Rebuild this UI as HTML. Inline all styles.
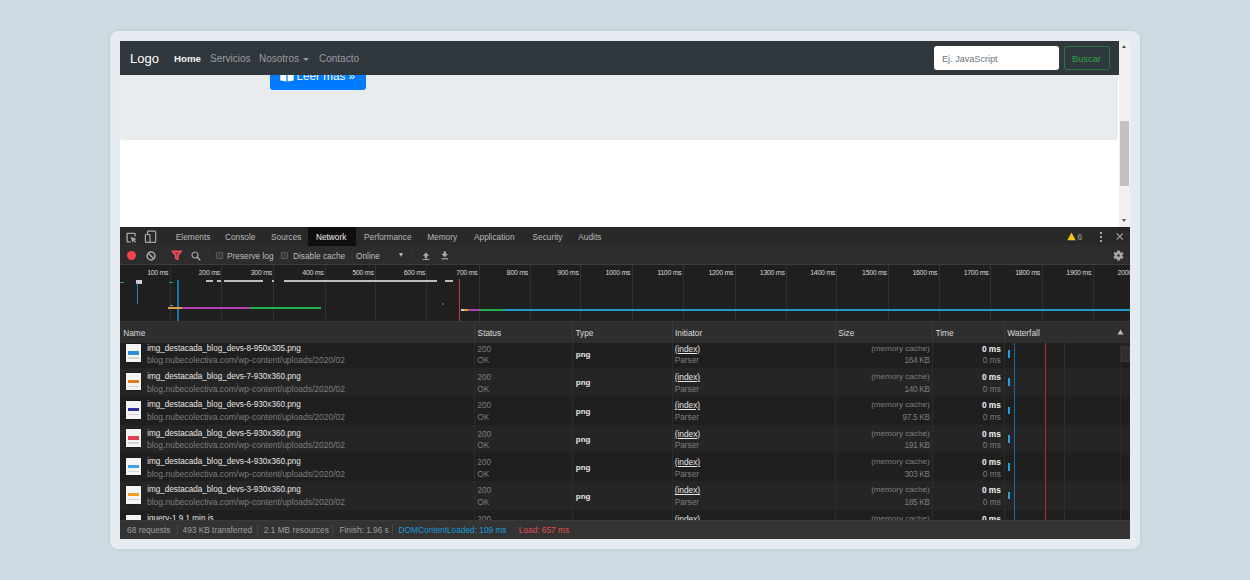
<!DOCTYPE html><html><head><meta charset="utf-8"><style>
*{margin:0;padding:0;box-sizing:border-box}
html,body{width:1250px;height:580px;overflow:hidden;background:#cddae1;font-family:"Liberation Sans",sans-serif}
.a{position:absolute}
.nt{position:absolute;top:1px;line-height:34px;font-size:10px;color:#9a9da0;white-space:nowrap}
.t{position:absolute;white-space:nowrap;font-size:8.3px;color:#bdbdbd;line-height:12px}
.r{text-align:right}
</style></head><body>
<div class="a" style="left:110px;top:31px;width:1030px;height:517.5px;background:#e5ebf0;border-radius:8px;box-shadow:0 0 3px rgba(150,170,180,0.45)"></div>
<div class="a" style="left:120px;top:41px;width:999px;height:186px;background:#fff"></div>
<div class="a" style="left:120px;top:60px;width:998px;height:80px;background:#e9ecef;border-radius:3px"></div>
<div class="a" style="left:270px;top:60px;width:96px;height:30px;background:#007bff;border-radius:3px"></div>
<svg class="a" style="left:279.5px;top:68px" width="14" height="14" viewBox="0 0 14 14"><path d="M0.3 2L6.4 3.2V13.6L0.3 12.6Z" fill="#fff"/><path d="M13.7 2L7.6 3.2V13.6L13.7 12.6Z" fill="#fff"/></svg>
<div class="a" style="left:296.5px;top:68px;font-size:11.7px;line-height:16px;color:#fff;white-space:nowrap">Leer más »</div>
<div class="a" style="left:120px;top:41px;width:999px;height:34px;background:#30373d">
  <div class="nt" style="left:10px;font-size:13px;color:#fff">Logo</div>
  <div class="nt" style="left:54px;color:#f4f4f4;font-weight:bold;font-size:9.7px">Home</div>
  <div class="nt" style="left:90px">Servicios</div>
  <div class="nt" style="left:139px">Nosotros</div>
  <div class="a" style="left:182.5px;top:17px;width:0;height:0;border-left:3px solid transparent;border-right:3px solid transparent;border-top:3.5px solid #9a9da0"></div>
  <div class="nt" style="left:199px">Contacto</div>
  <div class="a" style="left:814px;top:5px;width:125px;height:24px;background:#fff;border-radius:3px"></div>
  <div class="nt" style="left:822px;font-size:9.1px;color:#6c757d">Ej. JavaScript</div>
  <div class="a" style="left:944px;top:5px;width:46px;height:24px;border:1px solid #217a3a;border-radius:3px"></div>
  <div class="nt" style="left:952px;font-size:9.3px;color:#28a745">Buscar</div>
</div>
<div class="a" style="left:1119px;top:41px;width:11px;height:186px;background:#f1f1f1">
  <div class="a" style="left:1.3px;top:80px;width:8.3px;height:65px;background:#c1c1c1"></div>
  <div class="a" style="left:3px;top:4px;width:0;height:0;border-left:2.5px solid transparent;border-right:2.5px solid transparent;border-bottom:3px solid #505050"></div>
  <div class="a" style="left:3px;top:178px;width:0;height:0;border-left:2.5px solid transparent;border-right:2.5px solid transparent;border-top:3px solid #505050"></div>
</div>
<div class="a" style="left:120px;top:227px;width:1010px;height:312px;background:#242424;overflow:hidden">
<div class="a" style="left:0;top:0;width:1010px;height:19px;background:#292929"></div>
<div class="a" style="left:0;top:18px;width:1010px;height:1px;background:#2f2f2f"></div>
<div class="a" style="left:0;top:19px;width:1010px;height:18px;background:#2c2c2c"></div>
<div class="a" style="left:0;top:0;width:1010px;height:1px;background:#222"></div>
<div class="a" style="left:0;top:37px;width:1010px;height:1px;background:#3d3d3d"></div>
<div class="a" style="left:188px;top:0;width:48px;height:19px;background:#0e0e0e"></div>
<div class="t" style="left:55.8px;top:4.4px;color:#b8b8b8">Elements</div>
<div class="t" style="left:105px;top:4.4px;color:#b8b8b8">Console</div>
<div class="t" style="left:151px;top:4.4px;color:#b8b8b8">Sources</div>
<div class="t" style="left:195.9px;top:4.4px;color:#f0f0f0">Network</div>
<div class="t" style="left:244px;top:4.4px;color:#b8b8b8">Performance</div>
<div class="t" style="left:307.2px;top:4.4px;color:#b8b8b8">Memory</div>
<div class="t" style="left:354px;top:4.4px;color:#b8b8b8">Application</div>
<div class="t" style="left:412.5px;top:4.4px;color:#b8b8b8">Security</div>
<div class="t" style="left:458.3px;top:4.4px;color:#b8b8b8">Audits</div>
<div class="a" style="left:6.7px;top:23.8px;width:9px;height:9px;border-radius:50%;background:#f04545"></div>
<div class="t" style="left:107px;top:22.7px">Preserve log</div>
<div class="a" style="left:95.6px;top:25px;width:7.2px;height:7px;border:1px solid #5a5a5a;background:#3a3a3a;border-radius:1px"></div>
<div class="a" style="left:160.6px;top:25px;width:7.2px;height:7px;border:1px solid #5a5a5a;background:#3a3a3a;border-radius:1px"></div>
<div class="t" style="left:173px;top:22.7px">Disable cache</div>
<div class="t" style="left:236px;top:22.7px">Online</div>
<div class="a" style="left:278.7px;top:26.1px;width:0;height:0;border-left:2.6px solid transparent;border-right:2.6px solid transparent;border-top:4.4px solid #b0b0b0"></div>
<svg class="a" style="left:6px;top:4.5px" width="11" height="11" viewBox="0 0 11 11"><path d="M4.6 9.8H1.7Q1.1 9.8 1.1 9.2V1.9Q1.1 1.3 1.7 1.3H8.4Q9 1.3 9 1.9V4.4" fill="none" stroke="#a8a8a8" stroke-width="1.35"/><path d="M4.6 4.8L10.8 7.1L8.4 7.9L10.3 9.9L9.3 10.8L7.4 8.8L6.6 11Z" fill="#a8a8a8"/></svg>
<svg class="a" style="left:24px;top:3px" width="13" height="13" viewBox="0 0 13 13"><rect x="3.5" y="1.1" width="8.2" height="11.2" rx="0.9" fill="none" stroke="#a8a8a8" stroke-width="1.2"/><rect x="1.4" y="4.5" width="4.6" height="7.8" rx="0.7" fill="#292929" stroke="#a8a8a8" stroke-width="1.2"/></svg>
<svg class="a" style="left:25.8px;top:23.8px" width="10" height="10" viewBox="0 0 10 10"><circle cx="5" cy="5" r="3.9" fill="none" stroke="#a8a8a8" stroke-width="1.5"/><path d="M2.3 2.3L7.7 7.7" stroke="#a8a8a8" stroke-width="1.5"/></svg>
<div class="a" style="left:42px;top:22px;width:1px;height:12px;background:#2f2f2f"></div>
<svg class="a" style="left:50.5px;top:23.2px" width="12" height="10.5" viewBox="0 0 12 10.5"><path d="M1.3 1.3H10.3L6.9 5.3V9.2L4.7 8.2V5.3Z" fill="#a8283a" stroke="#ec5060" stroke-width="1.7" stroke-linejoin="round"/></svg>
<svg class="a" style="left:70.6px;top:23.6px" width="10" height="10" viewBox="0 0 10 10"><circle cx="4" cy="4" r="3" fill="none" stroke="#a8a8a8" stroke-width="1.2"/><path d="M6.2 6.2L9.3 9.3" stroke="#a8a8a8" stroke-width="1.5"/></svg>
<div class="a" style="left:88px;top:22px;width:1px;height:12px;background:#323232"></div>
<div class="a" style="left:292px;top:22px;width:1px;height:12px;background:#323232"></div>
<svg class="a" style="left:301.6px;top:24.7px" width="8" height="8.2" viewBox="0 0 9 10"><path d="M4.5 0.5L8.5 4.5H6V7.5H3V4.5H0.5Z" fill="#a8a8a8"/><rect x="0.5" y="8.5" width="8" height="1.4" fill="#a8a8a8"/></svg>
<svg class="a" style="left:321.1px;top:24.4px" width="7.5" height="8.5" viewBox="0 0 9 10"><path d="M3 0.5H6V3.5H8.5L4.5 7.5L0.5 3.5H3Z" fill="#a8a8a8"/><rect x="0.5" y="8.5" width="8" height="1.4" fill="#a8a8a8"/></svg>
<svg class="a" style="left:947px;top:5px" width="9" height="9" viewBox="0 0 9 9"><path d="M4.5 0.5L8.7 8.2H0.3Z" fill="#f5c518"/></svg>
<div class="t" style="left:957.5px;top:4px;color:#a0a4a8">6</div>
<div class="a" style="left:979.8px;top:5.4px;width:1.8px;height:1.8px;background:#a8a8a8"></div>
<div class="a" style="left:979.8px;top:9.0px;width:1.8px;height:1.8px;background:#a8a8a8"></div>
<div class="a" style="left:979.8px;top:12.8px;width:1.8px;height:1.8px;background:#a8a8a8"></div>
<svg class="a" style="left:995.6px;top:5.9px" width="7.5" height="7" viewBox="0 0 8 8"><path d="M0.5 0.5L7.5 7.5M7.5 0.5L0.5 7.5" stroke="#a8a8a8" stroke-width="1.2"/></svg>
<svg class="a" style="left:993.3px;top:22.6px" width="11" height="11" viewBox="0 0 11 11"><path d="M4.24 0.45 L6.76 0.45 L7.12 2.17 L7.57 2.43 L9.24 1.89 L10.50 4.07 L9.19 5.24 L9.19 5.76 L10.50 6.93 L9.24 9.11 L7.57 8.57 L7.12 8.83 L6.76 10.55 L4.24 10.55 L3.88 8.83 L3.43 8.57 L1.76 9.11 L0.50 6.93 L1.81 5.76 L1.81 5.24 L0.50 4.07 L1.76 1.89 L3.43 2.43 L3.88 2.17Z" fill="#a8a8a8"/><circle cx="5.5" cy="5.5" r="1.3" fill="#2c2c2c"/></svg>
<div class="a" style="left:986.5px;top:22px;width:1px;height:12px;background:#2f2f2f"></div>
<div class="a" style="left:0;top:38px;width:1010px;height:56px;background:#1f1f1f"></div>
<div class="a" style="left:50px;top:38px;width:1px;height:56px;background:#303030"></div>
<div class="t r" style="left:-11.7px;width:60px;top:39.5px;color:#d8d8d8;font-size:7px;letter-spacing:-0.3px">100 ms</div>
<div class="a" style="left:101px;top:38px;width:1px;height:56px;background:#303030"></div>
<div class="t r" style="left:39.9px;width:60px;top:39.5px;color:#d8d8d8;font-size:7px;letter-spacing:-0.3px">200 ms</div>
<div class="a" style="left:153px;top:38px;width:1px;height:56px;background:#303030"></div>
<div class="t r" style="left:91.9px;width:60px;top:39.5px;color:#d8d8d8;font-size:7px;letter-spacing:-0.3px">300 ms</div>
<div class="a" style="left:205px;top:38px;width:1px;height:56px;background:#303030"></div>
<div class="t r" style="left:143.5px;width:60px;top:39.5px;color:#d8d8d8;font-size:7px;letter-spacing:-0.3px">400 ms</div>
<div class="a" style="left:255px;top:38px;width:1px;height:56px;background:#303030"></div>
<div class="t r" style="left:193.6px;width:60px;top:39.5px;color:#d8d8d8;font-size:7px;letter-spacing:-0.3px">500 ms</div>
<div class="a" style="left:306px;top:38px;width:1px;height:56px;background:#303030"></div>
<div class="t r" style="left:244.9px;width:60px;top:39.5px;color:#d8d8d8;font-size:7px;letter-spacing:-0.3px">600 ms</div>
<div class="a" style="left:359px;top:38px;width:1px;height:56px;background:#303030"></div>
<div class="t r" style="left:297.5px;width:60px;top:39.5px;color:#d8d8d8;font-size:7px;letter-spacing:-0.3px">700 ms</div>
<div class="a" style="left:410px;top:38px;width:1px;height:56px;background:#303030"></div>
<div class="t r" style="left:348.0px;width:60px;top:39.5px;color:#d8d8d8;font-size:7px;letter-spacing:-0.3px">800 ms</div>
<div class="a" style="left:460px;top:38px;width:1px;height:56px;background:#303030"></div>
<div class="t r" style="left:398.6px;width:60px;top:39.5px;color:#d8d8d8;font-size:7px;letter-spacing:-0.3px">900 ms</div>
<div class="a" style="left:512px;top:38px;width:1px;height:56px;background:#303030"></div>
<div class="t r" style="left:450.2px;width:60px;top:39.5px;color:#d8d8d8;font-size:7px;letter-spacing:-0.3px">1000 ms</div>
<div class="a" style="left:563px;top:38px;width:1px;height:56px;background:#303030"></div>
<div class="t r" style="left:501.4px;width:60px;top:39.5px;color:#d8d8d8;font-size:7px;letter-spacing:-0.3px">1100 ms</div>
<div class="a" style="left:615px;top:38px;width:1px;height:56px;background:#303030"></div>
<div class="t r" style="left:553.2px;width:60px;top:39.5px;color:#d8d8d8;font-size:7px;letter-spacing:-0.3px">1200 ms</div>
<div class="a" style="left:666px;top:38px;width:1px;height:56px;background:#303030"></div>
<div class="t r" style="left:604.6px;width:60px;top:39.5px;color:#d8d8d8;font-size:7px;letter-spacing:-0.3px">1300 ms</div>
<div class="a" style="left:716px;top:38px;width:1px;height:56px;background:#303030"></div>
<div class="t r" style="left:655.0px;width:60px;top:39.5px;color:#d8d8d8;font-size:7px;letter-spacing:-0.3px">1400 ms</div>
<div class="a" style="left:768px;top:38px;width:1px;height:56px;background:#303030"></div>
<div class="t r" style="left:706.8px;width:60px;top:39.5px;color:#d8d8d8;font-size:7px;letter-spacing:-0.3px">1500 ms</div>
<div class="a" style="left:819px;top:38px;width:1px;height:56px;background:#303030"></div>
<div class="t r" style="left:757.2px;width:60px;top:39.5px;color:#d8d8d8;font-size:7px;letter-spacing:-0.3px">1600 ms</div>
<div class="a" style="left:870px;top:38px;width:1px;height:56px;background:#303030"></div>
<div class="t r" style="left:808.4px;width:60px;top:39.5px;color:#d8d8d8;font-size:7px;letter-spacing:-0.3px">1700 ms</div>
<div class="a" style="left:922px;top:38px;width:1px;height:56px;background:#303030"></div>
<div class="t r" style="left:860.0px;width:60px;top:39.5px;color:#d8d8d8;font-size:7px;letter-spacing:-0.3px">1800 ms</div>
<div class="a" style="left:973px;top:38px;width:1px;height:56px;background:#303030"></div>
<div class="t r" style="left:911.1px;width:60px;top:39.5px;color:#d8d8d8;font-size:7px;letter-spacing:-0.3px">1900 ms</div>
<div class="a" style="left:1024px;top:38px;width:1px;height:56px;background:#303030"></div>
<div class="t r" style="left:962.3px;width:60px;top:39.5px;color:#d8d8d8;font-size:7px;letter-spacing:-0.3px">2000 ms</div>
<div class="a" style="left:86.4px;top:52.5px;width:6.4px;height:2px;background:#bdbdbd"></div>
<div class="a" style="left:97.3px;top:52.5px;width:3.5px;height:2px;background:#bdbdbd"></div>
<div class="a" style="left:103.7px;top:52.5px;width:39.8px;height:2px;background:#bdbdbd"></div>
<div class="a" style="left:151.7px;top:52.5px;width:1.9px;height:2px;background:#bdbdbd"></div>
<div class="a" style="left:163.6px;top:52.5px;width:153.0px;height:2px;background:#bdbdbd"></div>
<div class="a" style="left:325.3px;top:52.5px;width:7.7px;height:2px;background:#bdbdbd"></div>
<div class="a" style="left:0.0px;top:54.5px;width:4.0px;height:1.5px;background:#2a9d8f"></div>
<div class="a" style="left:16.0px;top:53.0px;width:6.0px;height:3.5px;background:#cfcfcf"></div>
<div class="a" style="left:16.8px;top:56.0px;width:1.0px;height:21px;background:#1e88a8"></div>
<div class="a" style="left:49.3px;top:54.5px;width:3.5px;height:1.5px;background:#2a9d8f"></div>
<div class="a" style="left:57.4px;top:52.5px;width:1.2px;height:41.5px;background:#1a73a8"></div>
<div class="a" style="left:49.5px;top:77.8px;width:3.0px;height:1.5px;background:#5fb88a"></div>
<div class="a" style="left:48.0px;top:80.2px;width:13.6px;height:2.2px;background:#e0a040"></div>
<div class="a" style="left:61.6px;top:80.2px;width:68.3px;height:2.2px;background:#b040b0"></div>
<div class="a" style="left:129.9px;top:80.2px;width:71.5px;height:2.2px;background:#20b050"></div>
<div class="a" style="left:322.4px;top:75.6px;width:2.0px;height:2px;background:#2f5f78"></div>
<div class="a" style="left:338.5px;top:52.0px;width:1.5px;height:42px;background:#c03a3a"></div>
<div class="a" style="left:340.7px;top:82.0px;width:3.5px;height:2px;background:#cccccc"></div>
<div class="a" style="left:344.2px;top:82.0px;width:4.2px;height:2px;background:#e0a040"></div>
<div class="a" style="left:348.4px;top:82.0px;width:11.5px;height:2px;background:#b040b0"></div>
<div class="a" style="left:359.9px;top:82.0px;width:23.9px;height:2px;background:#20b050"></div>
<div class="a" style="left:383.8px;top:82.0px;width:626.2px;height:2px;background:#2499cc"></div>
<div class="a" style="left:0;top:94px;width:1010px;height:1px;background:#3a3a3a"></div>
<div class="a" style="left:0;top:112.70px;width:1010px;height:28.85px;background:#1f1f1f"></div>
<div class="a" style="left:0;top:141.05px;width:1010px;height:28.85px;background:#252525"></div>
<div class="a" style="left:0;top:169.40px;width:1010px;height:28.85px;background:#1f1f1f"></div>
<div class="a" style="left:0;top:197.75px;width:1010px;height:28.85px;background:#252525"></div>
<div class="a" style="left:0;top:226.10px;width:1010px;height:28.85px;background:#1f1f1f"></div>
<div class="a" style="left:0;top:254.45px;width:1010px;height:28.85px;background:#252525"></div>
<div class="a" style="left:0;top:282.80px;width:1010px;height:28.85px;background:#1f1f1f"></div>
<div class="a" style="left:5.9px;top:117.40px;width:15.5px;height:17.6px;background:#f4f4f4;box-shadow:0 0 1px #000"></div>
<div class="a" style="left:8px;top:124.40px;width:11.3px;height:3.3px;background:#2d8fd0"></div>
<div class="a" style="left:8px;top:130.30px;width:11.3px;height:1.4px;background:#d8d2d8"></div>
<div class="t" style="left:27.2px;top:115.50px;color:#e6e6e6;font-size:8.15px">img_destacada_blog_devs-8-950x305.png</div>
<div class="t" style="left:27px;top:127.20px;color:#7e7e7e;font-size:8.5px">blog.nubecolectiva.com/wp-content/uploads/2020/02</div>
<div class="t" style="left:357.3px;top:115.50px;color:#7e7e7e">200</div>
<div class="t" style="left:357.3px;top:127.20px;color:#7e7e7e">OK</div>
<div class="t" style="left:455.8px;top:122.00px;color:#e6e6e6;font-weight:bold;font-size:8px">png</div>
<div class="t" style="left:554.7px;top:115.50px;color:#e6e6e6;text-decoration:underline">(index)</div>
<div class="t" style="left:554.7px;top:127.20px;color:#7e7e7e">Parser</div>
<div class="t r" style="left:709px;width:100.6px;top:115.50px;color:#7e7e7e;font-size:8.1px">(memory cache)</div>
<div class="t r" style="left:709px;width:100.6px;top:127.20px;color:#7e7e7e;letter-spacing:-0.35px">164 KB</div>
<div class="t r" style="left:780px;width:100.8px;top:115.50px;color:#f0f0f0;font-weight:bold">0 ms</div>
<div class="t r" style="left:780px;width:100.8px;top:127.20px;color:#7e7e7e">0 ms</div>
<div class="a" style="left:888.3px;top:122.80px;width:2px;height:7.8px;background:#28a0e0"></div>
<div class="a" style="left:5.9px;top:145.75px;width:15.5px;height:17.6px;background:#f4f4f4;box-shadow:0 0 1px #000"></div>
<div class="a" style="left:8px;top:152.75px;width:11.3px;height:3.3px;background:#e07a20"></div>
<div class="a" style="left:8px;top:158.65px;width:11.3px;height:1.4px;background:#d8d2d8"></div>
<div class="t" style="left:27.2px;top:143.85px;color:#e6e6e6;font-size:8.15px">img_destacada_blog_devs-7-930x360.png</div>
<div class="t" style="left:27px;top:155.55px;color:#7e7e7e;font-size:8.5px">blog.nubecolectiva.com/wp-content/uploads/2020/02</div>
<div class="t" style="left:357.3px;top:143.85px;color:#7e7e7e">200</div>
<div class="t" style="left:357.3px;top:155.55px;color:#7e7e7e">OK</div>
<div class="t" style="left:455.8px;top:150.35px;color:#e6e6e6;font-weight:bold;font-size:8px">png</div>
<div class="t" style="left:554.7px;top:143.85px;color:#e6e6e6;text-decoration:underline">(index)</div>
<div class="t" style="left:554.7px;top:155.55px;color:#7e7e7e">Parser</div>
<div class="t r" style="left:709px;width:100.6px;top:143.85px;color:#7e7e7e;font-size:8.1px">(memory cache)</div>
<div class="t r" style="left:709px;width:100.6px;top:155.55px;color:#7e7e7e;letter-spacing:-0.35px">140 KB</div>
<div class="t r" style="left:780px;width:100.8px;top:143.85px;color:#f0f0f0;font-weight:bold">0 ms</div>
<div class="t r" style="left:780px;width:100.8px;top:155.55px;color:#7e7e7e">0 ms</div>
<div class="a" style="left:888.3px;top:151.15px;width:2px;height:7.8px;background:#28a0e0"></div>
<div class="a" style="left:5.9px;top:174.10px;width:15.5px;height:17.6px;background:#f4f4f4;box-shadow:0 0 1px #000"></div>
<div class="a" style="left:8px;top:181.10px;width:11.3px;height:3.3px;background:#3030a0"></div>
<div class="a" style="left:8px;top:187.00px;width:11.3px;height:1.4px;background:#d8d2d8"></div>
<div class="t" style="left:27.2px;top:172.20px;color:#e6e6e6;font-size:8.15px">img_destacada_blog_devs-6-930x360.png</div>
<div class="t" style="left:27px;top:183.90px;color:#7e7e7e;font-size:8.5px">blog.nubecolectiva.com/wp-content/uploads/2020/02</div>
<div class="t" style="left:357.3px;top:172.20px;color:#7e7e7e">200</div>
<div class="t" style="left:357.3px;top:183.90px;color:#7e7e7e">OK</div>
<div class="t" style="left:455.8px;top:178.70px;color:#e6e6e6;font-weight:bold;font-size:8px">png</div>
<div class="t" style="left:554.7px;top:172.20px;color:#e6e6e6;text-decoration:underline">(index)</div>
<div class="t" style="left:554.7px;top:183.90px;color:#7e7e7e">Parser</div>
<div class="t r" style="left:709px;width:100.6px;top:172.20px;color:#7e7e7e;font-size:8.1px">(memory cache)</div>
<div class="t r" style="left:709px;width:100.6px;top:183.90px;color:#7e7e7e;letter-spacing:-0.35px">97.5 KB</div>
<div class="t r" style="left:780px;width:100.8px;top:172.20px;color:#f0f0f0;font-weight:bold">0 ms</div>
<div class="t r" style="left:780px;width:100.8px;top:183.90px;color:#7e7e7e">0 ms</div>
<div class="a" style="left:888.3px;top:179.50px;width:2px;height:7.8px;background:#28a0e0"></div>
<div class="a" style="left:5.9px;top:202.45px;width:15.5px;height:17.6px;background:#f4f4f4;box-shadow:0 0 1px #000"></div>
<div class="a" style="left:8px;top:209.45px;width:11.3px;height:3.3px;background:#e04050"></div>
<div class="a" style="left:8px;top:215.35px;width:11.3px;height:1.4px;background:#d8d2d8"></div>
<div class="t" style="left:27.2px;top:200.55px;color:#e6e6e6;font-size:8.15px">img_destacada_blog_devs-5-930x360.png</div>
<div class="t" style="left:27px;top:212.25px;color:#7e7e7e;font-size:8.5px">blog.nubecolectiva.com/wp-content/uploads/2020/02</div>
<div class="t" style="left:357.3px;top:200.55px;color:#7e7e7e">200</div>
<div class="t" style="left:357.3px;top:212.25px;color:#7e7e7e">OK</div>
<div class="t" style="left:455.8px;top:207.05px;color:#e6e6e6;font-weight:bold;font-size:8px">png</div>
<div class="t" style="left:554.7px;top:200.55px;color:#e6e6e6;text-decoration:underline">(index)</div>
<div class="t" style="left:554.7px;top:212.25px;color:#7e7e7e">Parser</div>
<div class="t r" style="left:709px;width:100.6px;top:200.55px;color:#7e7e7e;font-size:8.1px">(memory cache)</div>
<div class="t r" style="left:709px;width:100.6px;top:212.25px;color:#7e7e7e;letter-spacing:-0.35px">191 KB</div>
<div class="t r" style="left:780px;width:100.8px;top:200.55px;color:#f0f0f0;font-weight:bold">0 ms</div>
<div class="t r" style="left:780px;width:100.8px;top:212.25px;color:#7e7e7e">0 ms</div>
<div class="a" style="left:888.3px;top:207.85px;width:2px;height:7.8px;background:#28a0e0"></div>
<div class="a" style="left:5.9px;top:230.80px;width:15.5px;height:17.6px;background:#f4f4f4;box-shadow:0 0 1px #000"></div>
<div class="a" style="left:8px;top:237.80px;width:11.3px;height:3.3px;background:#40a0e0"></div>
<div class="a" style="left:8px;top:243.70px;width:11.3px;height:1.4px;background:#d8d2d8"></div>
<div class="t" style="left:27.2px;top:228.90px;color:#e6e6e6;font-size:8.15px">img_destacada_blog_devs-4-930x360.png</div>
<div class="t" style="left:27px;top:240.60px;color:#7e7e7e;font-size:8.5px">blog.nubecolectiva.com/wp-content/uploads/2020/02</div>
<div class="t" style="left:357.3px;top:228.90px;color:#7e7e7e">200</div>
<div class="t" style="left:357.3px;top:240.60px;color:#7e7e7e">OK</div>
<div class="t" style="left:455.8px;top:235.40px;color:#e6e6e6;font-weight:bold;font-size:8px">png</div>
<div class="t" style="left:554.7px;top:228.90px;color:#e6e6e6;text-decoration:underline">(index)</div>
<div class="t" style="left:554.7px;top:240.60px;color:#7e7e7e">Parser</div>
<div class="t r" style="left:709px;width:100.6px;top:228.90px;color:#7e7e7e;font-size:8.1px">(memory cache)</div>
<div class="t r" style="left:709px;width:100.6px;top:240.60px;color:#7e7e7e;letter-spacing:-0.35px">303 KB</div>
<div class="t r" style="left:780px;width:100.8px;top:228.90px;color:#f0f0f0;font-weight:bold">0 ms</div>
<div class="t r" style="left:780px;width:100.8px;top:240.60px;color:#7e7e7e">0 ms</div>
<div class="a" style="left:888.3px;top:236.20px;width:2px;height:7.8px;background:#28a0e0"></div>
<div class="a" style="left:5.9px;top:259.15px;width:15.5px;height:17.6px;background:#f4f4f4;box-shadow:0 0 1px #000"></div>
<div class="a" style="left:8px;top:266.15px;width:11.3px;height:3.3px;background:#f0a020"></div>
<div class="a" style="left:8px;top:272.05px;width:11.3px;height:1.4px;background:#d8d2d8"></div>
<div class="t" style="left:27.2px;top:257.25px;color:#e6e6e6;font-size:8.15px">img_destacada_blog_devs-3-930x360.png</div>
<div class="t" style="left:27px;top:268.95px;color:#7e7e7e;font-size:8.5px">blog.nubecolectiva.com/wp-content/uploads/2020/02</div>
<div class="t" style="left:357.3px;top:257.25px;color:#7e7e7e">200</div>
<div class="t" style="left:357.3px;top:268.95px;color:#7e7e7e">OK</div>
<div class="t" style="left:455.8px;top:263.75px;color:#e6e6e6;font-weight:bold;font-size:8px">png</div>
<div class="t" style="left:554.7px;top:257.25px;color:#e6e6e6;text-decoration:underline">(index)</div>
<div class="t" style="left:554.7px;top:268.95px;color:#7e7e7e">Parser</div>
<div class="t r" style="left:709px;width:100.6px;top:257.25px;color:#7e7e7e;font-size:8.1px">(memory cache)</div>
<div class="t r" style="left:709px;width:100.6px;top:268.95px;color:#7e7e7e;letter-spacing:-0.35px">185 KB</div>
<div class="t r" style="left:780px;width:100.8px;top:257.25px;color:#f0f0f0;font-weight:bold">0 ms</div>
<div class="t r" style="left:780px;width:100.8px;top:268.95px;color:#7e7e7e">0 ms</div>
<div class="a" style="left:888.3px;top:264.55px;width:2px;height:7.8px;background:#28a0e0"></div>
<div class="a" style="left:5.9px;top:287.50px;width:15.5px;height:17.6px;background:#f4f4f4;box-shadow:0 0 1px #000"></div>
<div class="t" style="left:27.2px;top:285.60px;color:#e6e6e6;font-size:8.15px">jquery-1.9.1.min.js</div>
<div class="t" style="left:27px;top:297.30px;color:#7e7e7e;font-size:8.5px">blog.nubecolectiva.com/wp-content/uploads/2020/02</div>
<div class="t" style="left:357.3px;top:285.60px;color:#7e7e7e">200</div>
<div class="t" style="left:357.3px;top:297.30px;color:#7e7e7e">OK</div>
<div class="t" style="left:554.7px;top:285.60px;color:#e6e6e6;text-decoration:underline">(index)</div>
<div class="t" style="left:554.7px;top:297.30px;color:#7e7e7e">Parser</div>
<div class="t r" style="left:709px;width:100.6px;top:285.60px;color:#7e7e7e;font-size:8.1px">(memory cache)</div>
<div class="t r" style="left:709px;width:100.6px;top:297.30px;color:#7e7e7e;letter-spacing:-0.35px"></div>
<div class="t r" style="left:780px;width:100.8px;top:285.60px;color:#f0f0f0;font-weight:bold">0 ms</div>
<div class="t r" style="left:780px;width:100.8px;top:297.30px;color:#7e7e7e">0 ms</div>
<div class="a" style="left:888.3px;top:292.90px;width:2px;height:7.8px;background:#28a0e0"></div>
<div class="a" style="left:894px;top:116px;width:1px;height:177px;background:#1a6aa0"></div>
<div class="a" style="left:925px;top:116px;width:1px;height:177px;background:#b03030"></div>
<div class="a" style="left:944px;top:116px;width:1px;height:177px;background:#2d2d2d"></div>
<div class="a" style="left:1000px;top:116px;width:1px;height:177px;background:#2a2a2a"></div>
<div class="a" style="left:0;top:93.5px;width:1010px;height:22.5px;background:#2e2e2e"></div>
<div class="a" style="left:0;top:93.5px;width:1010px;height:1px;background:#363636"></div>
<div class="t" style="left:3.2px;top:99.8px;color:#dcdcdc">Name</div>
<div class="a" style="left:354.4px;top:93.5px;width:1px;height:22.5px;background:#393939"></div>
<div class="a" style="left:354.4px;top:116px;width:1px;height:177px;background:#2c2c2c"></div>
<div class="t" style="left:357.6px;top:99.8px;color:#dcdcdc">Status</div>
<div class="a" style="left:452.2px;top:93.5px;width:1px;height:22.5px;background:#393939"></div>
<div class="a" style="left:452.2px;top:116px;width:1px;height:177px;background:#2c2c2c"></div>
<div class="t" style="left:455.4px;top:99.8px;color:#dcdcdc">Type</div>
<div class="a" style="left:551.8px;top:93.5px;width:1px;height:22.5px;background:#393939"></div>
<div class="a" style="left:551.8px;top:116px;width:1px;height:177px;background:#2c2c2c"></div>
<div class="t" style="left:555.0px;top:99.8px;color:#dcdcdc">Initiator</div>
<div class="a" style="left:715.0px;top:93.5px;width:1px;height:22.5px;background:#393939"></div>
<div class="a" style="left:715.0px;top:116px;width:1px;height:177px;background:#2c2c2c"></div>
<div class="t" style="left:718.2px;top:99.8px;color:#dcdcdc">Size</div>
<div class="a" style="left:812.3px;top:93.5px;width:1px;height:22.5px;background:#393939"></div>
<div class="a" style="left:812.3px;top:116px;width:1px;height:177px;background:#2c2c2c"></div>
<div class="t" style="left:815.5px;top:99.8px;color:#dcdcdc">Time</div>
<div class="a" style="left:884.1px;top:93.5px;width:1px;height:22.5px;background:#393939"></div>
<div class="a" style="left:884.1px;top:116px;width:1px;height:177px;background:#2c2c2c"></div>
<div class="t" style="left:887.3px;top:99.8px;color:#dcdcdc">Waterfall</div>
<svg class="a" style="left:997px;top:101.5px" width="7" height="6" viewBox="0 0 7 6"><path d="M3.5 0.5L6.5 5.5H0.5Z" fill="#bdbdbd"/></svg>
<div class="a" style="left:1000.5px;top:118.6px;width:9.5px;height:16px;background:#2e2e2e;border:1px solid #383838"></div>
<div class="a" style="left:0;top:293px;width:1010px;height:19px;background:#333;border-top:1px solid #3a3a3a"></div>
<div class="t" style="left:7.1px;top:297px;color:#9e9e9e">68 requests</div>
<div class="t" style="left:62.6px;top:297px;color:#9e9e9e">493 KB transferred</div>
<div class="t" style="left:143.8px;top:297px;color:#9e9e9e">2.1 MB resources</div>
<div class="t" style="left:219.4px;top:297px;color:#9e9e9e">Finish: 1.96 s</div>
<div class="t" style="left:278.6px;top:297px;color:#1a9ad6">DOMContentLoaded: 109 ms</div>
<div class="t" style="left:398.8px;top:297px;color:#e05050">Load: 657 ms</div>
<div class="a" style="left:56.8px;top:297px;width:1px;height:11px;background:#444"></div>
<div class="a" style="left:137.2px;top:297px;width:1px;height:11px;background:#444"></div>
<div class="a" style="left:212.3px;top:297px;width:1px;height:11px;background:#444"></div>
<div class="a" style="left:271.6px;top:297px;width:1px;height:11px;background:#444"></div>
</div>
</body></html>
